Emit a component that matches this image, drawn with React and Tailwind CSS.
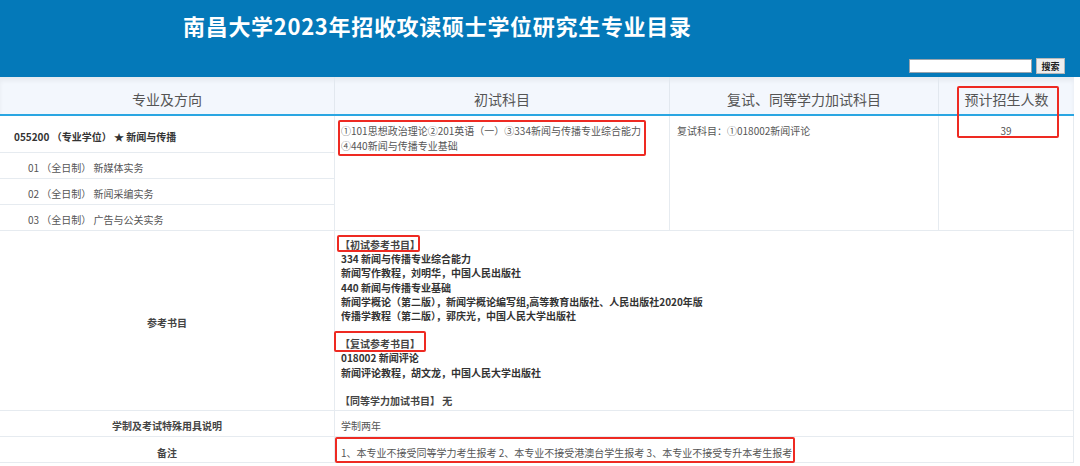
export default function App() {
  const font = { fontFamily: '"Noto Sans CJK SC", "Noto Sans", sans-serif' };
  const cell = "border-b border-r border-[#e6ebf0]";
  const redBox = "absolute border-2 border-[#ee2a22] rounded-[2px] pointer-events-none";
  return (
    <div className="w-[1080px] h-[466px] bg-white overflow-hidden" style={font}>
      {/* Header */}
      <div className="h-[77px] bg-[#0479b9] flex flex-col">
        <div className="pl-[183px] pt-[10px] text-white text-[22px] font-bold leading-[30px] tracking-[0.7px]">
          南昌大学2023年招收攻读硕士学位研究生专业目录
        </div>
        <div className="mt-auto mb-[3px] flex justify-end items-center gap-[4px] pr-[15px]">
          <div className="w-[123px] h-[14px] bg-white border border-[#9aa4ad]"></div>
          <div className="w-[29px] h-[16px] bg-[#eeeeee] border border-[#b8b8b8] flex items-center justify-center text-[9px] leading-none text-[#222] font-bold">
            搜索
          </div>
        </div>
      </div>

      {/* Table */}
      <div className="relative w-[1074px]">
        <div className="grid grid-cols-[335px_335px_269px_135px] grid-rows-[39px_37px_26px_26px_26px_180px_26px_26px]">
          {/* Header row */}
          <div className="col-span-4 row-start-1 grid grid-cols-[335px_335px_269px_135px] bg-[#f3f7fd] border-b-2 border-[#2aa6e2] shadow-[inset_0_4px_4px_rgba(0,0,0,0.05)]">
            <div className="flex items-center justify-center pt-[7px] border-r border-[#e2e8ef] text-[14px] text-[#555]">专业及方向</div>
            <div className="flex items-center justify-center pt-[7px] border-r border-[#e2e8ef] text-[14px] text-[#555]">初试科目</div>
            <div className="flex items-center justify-center pt-[7px] border-r border-[#e2e8ef] text-[14px] text-[#555]">复试、同等学力加试科目</div>
            <div className="flex items-center justify-center pt-[7px] text-[14px] text-[#555]">预计招生人数</div>
          </div>

          {/* Major row */}
          <div className={`${cell} col-start-1 row-start-2 flex items-center pt-[4px] pl-[14px] text-[10px] font-bold text-[#333]`}>
            055200 （专业学位） ★ 新闻与传播
          </div>
          <div className={`${cell} col-start-1 row-start-3 flex items-center pt-[3px] pl-[28px] text-[10px] text-[#555]`}>
            01 （全日制） 新媒体实务
          </div>
          <div className={`${cell} col-start-1 row-start-4 flex items-center pt-[3px] pl-[28px] text-[10px] text-[#555]`}>
            02 （全日制） 新闻采编实务
          </div>
          <div className={`${cell} col-start-1 row-start-5 flex items-center pt-[3px] pl-[28px] text-[10px] text-[#555]`}>
            03 （全日制） 广告与公关实务
          </div>
          <div className={`${cell} col-start-2 row-start-2 row-span-4 pl-[6px] pt-[8px] text-[10px] leading-[14.5px] text-[#555]`}>
            <div>①101思想政治理论②201英语（一）③334新闻与传播专业综合能力</div>
            <div>④440新闻与传播专业基础</div>
          </div>
          <div className={`${cell} col-start-3 row-start-2 row-span-4 pl-[7px] pt-[8px] text-[10px] leading-[14.5px] text-[#555]`}>
            复试科目：①018002新闻评论
          </div>
          <div className={`${cell} col-start-4 row-start-2 row-span-4 pt-[8px] text-center text-[10px] leading-[14px] text-[#555]`}>
            39
          </div>

          {/* Reference books */}
          <div className={`${cell} col-start-1 row-start-6 flex items-center justify-center pt-[4px] text-[10px] font-bold text-[#444]`}>
            参考书目
          </div>
          <div className={`${cell} col-start-2 col-span-3 row-start-6 pl-[5px] pt-[7px] text-[10px] leading-[14.2px] font-bold text-[#333]`}>
            <div className="text-[#444]">【初试参考书目】</div>
            <div className="pl-[1px]">334 新闻与传播专业综合能力</div>
            <div className="pl-[1px]">新闻写作教程，刘明华，中国人民出版社</div>
            <div className="pl-[1px]">440 新闻与传播专业基础</div>
            <div className="pl-[1px]">新闻学概论（第二版），新闻学概论编写组,高等教育出版社、人民出版社2020年版</div>
            <div className="pl-[1px]">传播学教程（第二版），郭庆光，中国人民大学出版社</div>
            <div className="h-[14px]"></div>
            <div className="text-[#444]">【复试参考书目】</div>
            <div className="pl-[1px]">018002 新闻评论</div>
            <div className="pl-[1px]">新闻评论教程，胡文龙，中国人民大学出版社</div>
            <div className="h-[14px]"></div>
            <div className="text-[#444]">【同等学力加试书目】 无</div>
          </div>

          {/* 学制 */}
          <div className={`${cell} col-start-1 row-start-7 flex items-center justify-center pt-[4px] text-[10px] font-bold text-[#444]`}>
            学制及考试特殊用具说明
          </div>
          <div className={`${cell} col-start-2 col-span-3 row-start-7 flex items-center pt-[4px] pl-[6px] text-[10px] text-[#555]`}>
            学制两年
          </div>

          {/* 备注 */}
          <div className={`${cell} col-start-1 row-start-8 flex items-center justify-center pt-[5px] text-[10px] font-bold text-[#444]`}>
            备注
          </div>
          <div className={`${cell} col-start-2 col-span-3 row-start-8 flex items-center pt-[5px] pl-[6px] text-[10px] text-[#555]`}>
            1、本专业不接受同等学力考生报考 2、本专业不接受港澳台学生报考 3、本专业不接受专升本考生报考
          </div>
        </div>

        {/* Red annotation boxes */}
        <div className={`${redBox} left-[338px] top-[43px] w-[308px] h-[36px]`}></div>
        <div className={`${redBox} left-[957px] top-[9px] w-[102px] h-[52px]`}></div>
        <div className={`${redBox} left-[337px] top-[158px] w-[83px] h-[17px]`}></div>
        <div className={`${redBox} left-[334px] top-[254px] w-[92px] h-[21px]`}></div>
        <div className={`${redBox} left-[335px] top-[360px] w-[460px] h-[26px]`}></div>
      </div>
    </div>
  );
}
